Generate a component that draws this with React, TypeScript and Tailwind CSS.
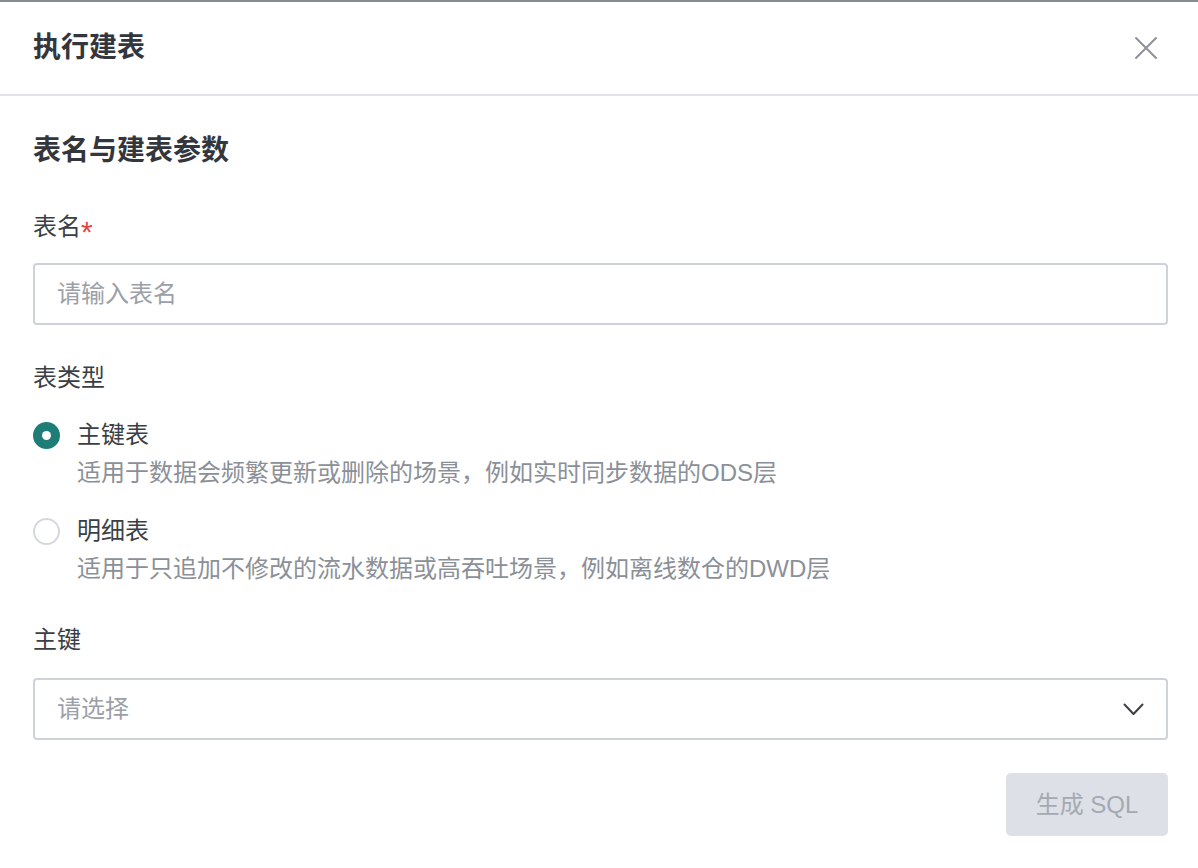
const font = "font-['Liberation_Sans','Noto_Sans_CJK_SC',sans-serif]";

function Radio({ checked, label, desc, className }: { checked: boolean; label: string; desc: string; className?: string }) {
  return (
    <div className={className}>
      <div className="flex items-center h-[34px]">
        {checked ? (
          <span className="w-[27px] h-[27px] rounded-full bg-[#1e7e77] flex items-center justify-center">
            <span className="w-[9px] h-[9px] rounded-full bg-white" />
          </span>
        ) : (
          <span className="w-[27px] h-[27px] rounded-full border-2 border-[#d3d8df] bg-white" />
        )}
        <span className="ml-[17px] text-[24px] leading-[34px] text-[#3b3f45]">{label}</span>
      </div>
      <p className="mt-[4px] pl-[44px] text-[24px] leading-[34px] text-[#8b9098]">{desc}</p>
    </div>
  );
}

export default function App() {
  return (
    <div className={`w-full h-[868px] bg-white border-t-2 border-[#868a92] ${font}`}>
      {/* Header */}
      <div className="h-[94px] pl-[33px] pr-[30px] flex items-center justify-between border-b-2 border-[#e1e3e8]">
        <h1 className="text-[28px] leading-[40px] font-bold text-[#33373d]">执行建表</h1>
        <button className="w-[26px] h-[26px] mr-[9px] flex items-center justify-center text-[#8e9198]">
          <svg width="24" height="24" viewBox="0 0 24 24" fill="none" stroke="currentColor" strokeWidth="2" strokeLinecap="round">
            <path d="M2 2L22 22M22 2L2 22" />
          </svg>
        </button>
      </div>

      {/* Body */}
      <div className="pl-[33px] pr-[30px] pt-[35px]">
        <h2 className="text-[28px] leading-[40px] font-bold text-[#33373d]">表名与建表参数</h2>

        <label className="mt-[39px] h-[34px] flex items-center text-[24px] leading-[34px] text-[#3b3f45]">
          表名
          <span className="text-[30px] leading-none translate-y-[5px] text-[#e5453a]">*</span>
        </label>
        <div className="mt-[19px] h-[62px] border-2 border-[#ced3db] rounded-[4px] flex items-center px-[22px]">
          <span className="text-[24px] text-[#9ba0a8]">请输入表名</span>
        </div>

        <div className="mt-[36px] text-[24px] leading-[34px] text-[#3b3f45]">表类型</div>

        <Radio
          className="mt-[23px]"
          checked
          label="主键表"
          desc="适用于数据会频繁更新或删除的场景，例如实时同步数据的ODS层"
        />
        <Radio
          className="mt-[24px]"
          checked={false}
          label="明细表"
          desc="适用于只追加不修改的流水数据或高吞吐场景，例如离线数仓的DWD层"
        />

        <div className="mt-[37px] text-[24px] leading-[34px] text-[#3b3f45]">主键</div>
        <div className="mt-[21px] h-[62px] border-2 border-[#ced3db] rounded-[4px] flex items-center justify-between pl-[22px] pr-[22px]">
          <span className="text-[24px] text-[#9ba0a8]">请选择</span>
          <svg width="21" height="13" viewBox="0 0 21 13" fill="none" stroke="#3b3f45" strokeWidth="2" strokeLinecap="round" strokeLinejoin="round">
            <path d="M1.5 1.5L10.5 11L19.5 1.5" />
          </svg>
        </div>

        <div className="mt-[33px] flex justify-end">
          <button className="w-[162px] h-[63px] rounded-[5px] bg-[#dde0e7] text-[24px] text-[#a5a9b1]">生成 SQL</button>
        </div>
      </div>
    </div>
  );
}
